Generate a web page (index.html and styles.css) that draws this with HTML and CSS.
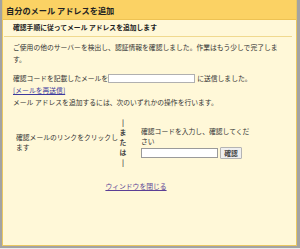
FILE: index.html
```html
<!DOCTYPE html>
<html lang="ja">
<head>
    <meta charset="UTF-8">
    <title>自分のメール アドレスを追加</title>
    <link rel="stylesheet" href="styles.css">
</head>
<body>
    <div class="frame">
        <div class="dialog">
            <div class="titlebar">自分のメール アドレスを追加</div>
            <div class="subtitle">確認手順に従ってメール アドレスを追加します</div>

            <div class="content">
                <p class="intro">ご使用の他のサーバーを検出し、認証情報を確認しました。作業はもう少しで完了しま<br>す。</p>

                <div class="sent-row">確認コードを記載したメールを<input class="addr" type="text">に送信しました。</div>
                <div class="line"><a href="#" class="resend">[メールを再送信]</a></div>
                <div class="line">メール アドレスを追加するには、次のいずれかの操作を行います。</div>

                <div class="choices">
                    <div class="choice-left">確認メールのリンクをクリックし<br>ます</div>
                    <div class="or">
                        <span>|</span><span>ま</span><span>た</span><span>は</span><span>|</span>
                    </div>
                    <div class="choice-right">
                        <div class="code-text">確認コードを入力し、確認してくだ<br>さい</div>
                        <div class="code-row">
                            <input class="code" type="text"><button class="confirm">確認</button>
                        </div>
                    </div>
                </div>

                <div class="close-row"><a href="#" class="close">ウィンドウを閉じる</a></div>
            </div>
        </div>
    </div>
</body>
</html>
```

FILE: styles.css
```css
body {
    margin: 0;
    background: #ececec;
    font-family: "Noto Sans CJK JP", "Noto Sans", sans-serif;
    font-size: 6.8px;
    color: #333;
}
.frame {
    width: 295px;
    height: 246px;
    border-style: solid;
    border-color: #a3a3a3;
    border-width: 0 3px 2px 2px;
}
.dialog {
    height: 245px;
    background: #fff8d8;
    border: 1px solid #e9c762;
    border-top: none;
}
.titlebar {
    height: 19px;
    line-height: 20px;
    padding-left: 3px;
    background: #fbd264;
    border-bottom: 1px solid #edc253;
    font-weight: bold;
    font-size: 8.2px;
    color: #222;
}
.subtitle {
    height: 16px;
    line-height: 15px;
    margin: 0 4px 0 1px;
    padding-left: 9px;
    border-bottom: 1px solid #f0d98e;
    font-weight: bold;
    color: #222;
}
.content {
    padding: 4px 12px 0 10px;
    line-height: 12px;
}
.intro {
    margin: 0 0 7px 0;
    white-space: nowrap;
}
.sent-row {
    display: flex;
    align-items: center;
    height: 12px;
}
.addr {
    width: 85px;
    height: 7px;
    margin: 0 2px 0 0;
    padding: 0;
    border: 1px solid #b0b0b0;
    background: #fff;
}
.line {
    height: 12px;
}
a {
    color: #3d3a9e;
}
.choices {
    display: flex;
    align-items: center;
    margin-top: 9px;
    line-height: 10px;
}
.choice-left {
    width: 103px;
    padding-left: 3px;
    white-space: nowrap;
}
.or {
    display: flex;
    flex-direction: column;
    align-items: center;
    width: 8px;
    font-weight: bold;
    color: #444;
}
.choice-right {
    width: 112px;
    margin-left: 14px;
    white-space: nowrap;
}
.code-text {
    margin-bottom: 1px;
}
.code-row {
    display: flex;
    align-items: center;
}
.code {
    width: 75px;
    height: 8px;
    padding: 0;
    margin: 0 2px 0 0;
    border: 1px solid #9a9a9a;
    background: #fff;
}
.confirm {
    width: 22px;
    height: 12px;
    padding: 0;
    border: 1px solid #b4b4b4;
    border-radius: 1px;
    background: #efefef;
    font-family: inherit;
    font-size: 6.8px;
    font-weight: bold;
    color: #444;
}
.close-row {
    width: 246px;
    margin-top: 13px;
    text-align: center;
}
.close {
    color: #5b3f95;
}
```
